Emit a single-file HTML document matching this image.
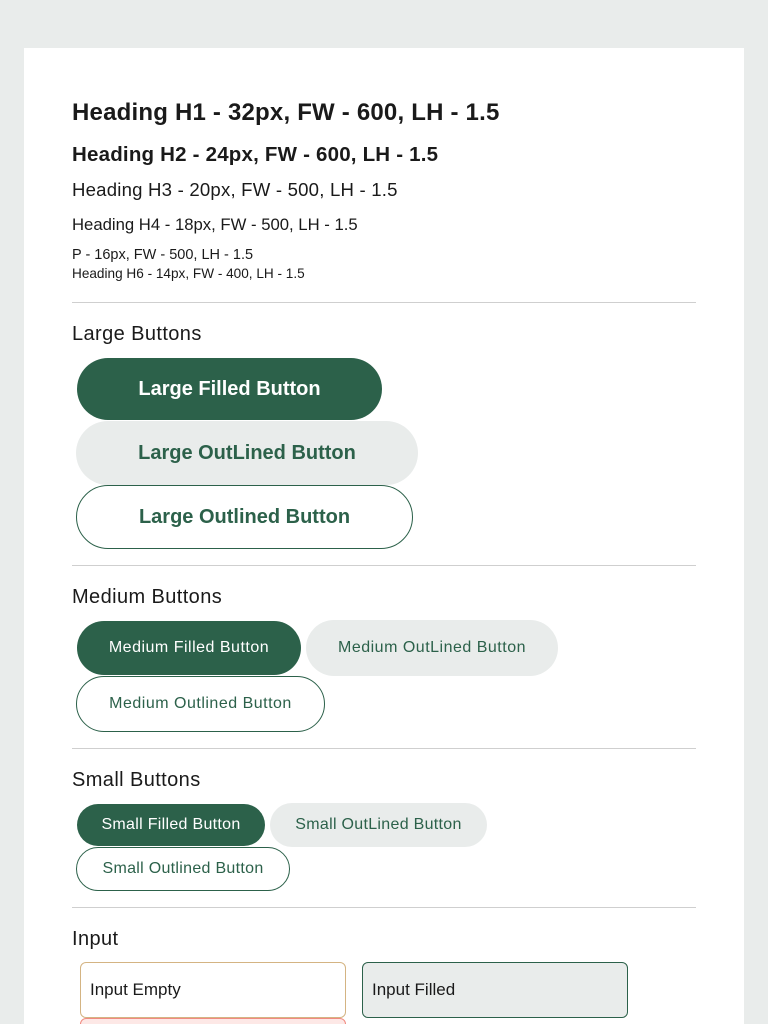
<!DOCTYPE html>
<html><head><style>
*{margin:0;padding:0;box-sizing:border-box}
html,body{width:768px;height:1024px;overflow:hidden}
body{background:#e9eceb;font-family:"Liberation Sans",sans-serif;color:#1a1a1a}
.wrap{position:relative;width:768px;height:1024px;overflow:hidden}
.card{position:absolute;left:24px;top:48px;width:720px;height:976px;background:#fff}
.t{position:absolute;left:72px;white-space:nowrap;line-height:1}
.hr{position:absolute;left:72px;width:624px;height:1px;background:#cfcfcf}
.b{position:absolute;display:flex;align-items:center;justify-content:center;border-radius:40px;white-space:nowrap;color:#2c614a}
.f{background:#2c614a;color:#fff}
.g{background:#e9eceb}
.o{border:1px solid #2c614a;background:#fff}
.L{font-size:20px;font-weight:bold}
.M{font-size:16px;letter-spacing:0.5px}
.S{font-size:16px;letter-spacing:0.3px}
.sec{font-size:20px;letter-spacing:0.4px}
.in{position:absolute;border-radius:6px;display:flex;align-items:center;padding-left:9px;font-size:17px}
</style></head><body>
<div class="wrap">
<div class="card"></div>
<div class="t" style="top:101px;font-size:24px;font-weight:bold;letter-spacing:0.2px">Heading H1 - 32px, FW - 600, LH - 1.5</div>
<div class="t" style="top:145px;font-size:20.5px;font-weight:bold;letter-spacing:0.2px">Heading H2 - 24px, FW - 600, LH - 1.5</div>
<div class="t" style="top:181px;font-size:18.6px;letter-spacing:0.2px">Heading H3 - 20px, FW - 500, LH - 1.5</div>
<div class="t" style="top:217px;font-size:16.7px">Heading H4 - 18px, FW - 500, LH - 1.5</div>
<div class="t" style="top:248px;font-size:14.5px">P - 16px, FW - 500, LH - 1.5</div>
<div class="t" style="top:267px;font-size:13.6px">Heading H6 - 14px, FW - 400, LH - 1.5</div>
<div class="hr" style="top:302px"></div>
<div class="t sec" style="top:324px">Large Buttons</div>
<div class="b f L" style="left:77px;top:358px;width:305px;height:62px">Large Filled Button</div>
<div class="b g L" style="left:76px;top:421px;width:342px;height:64px">Large OutLined Button</div>
<div class="b o L" style="left:76px;top:485px;width:337px;height:64px">Large Outlined Button</div>
<div class="hr" style="top:565px"></div>
<div class="t sec" style="top:587px">Medium Buttons</div>
<div class="b f M" style="left:77px;top:621px;width:224px;height:54px">Medium Filled Button</div>
<div class="b g M" style="left:306px;top:620px;width:252px;height:56px">Medium OutLined Button</div>
<div class="b o M" style="left:76px;top:676px;width:249px;height:56px">Medium Outlined Button</div>
<div class="hr" style="top:748px"></div>
<div class="t sec" style="top:770px">Small Buttons</div>
<div class="b f S" style="left:77px;top:804px;width:188px;height:42px">Small Filled Button</div>
<div class="b g S" style="left:270px;top:803px;width:217px;height:44px">Small OutLined Button</div>
<div class="b o S" style="left:76px;top:847px;width:214px;height:44px">Small Outlined Button</div>
<div class="hr" style="top:907px"></div>
<div class="t sec" style="top:929px">Input</div>
<div class="in" style="left:80px;top:962px;width:266px;height:56px;border:1px solid #d4b483;background:#fff">Input Empty</div>
<div class="in" style="left:362px;top:962px;width:266px;height:56px;border:1px solid #2c614a;background:#e9eceb">Input Filled</div>
<div class="in" style="left:80px;top:1018px;width:266px;height:56px;border:1px solid #f08a80;background:#fde8e6"></div>
</div>
</body></html>
